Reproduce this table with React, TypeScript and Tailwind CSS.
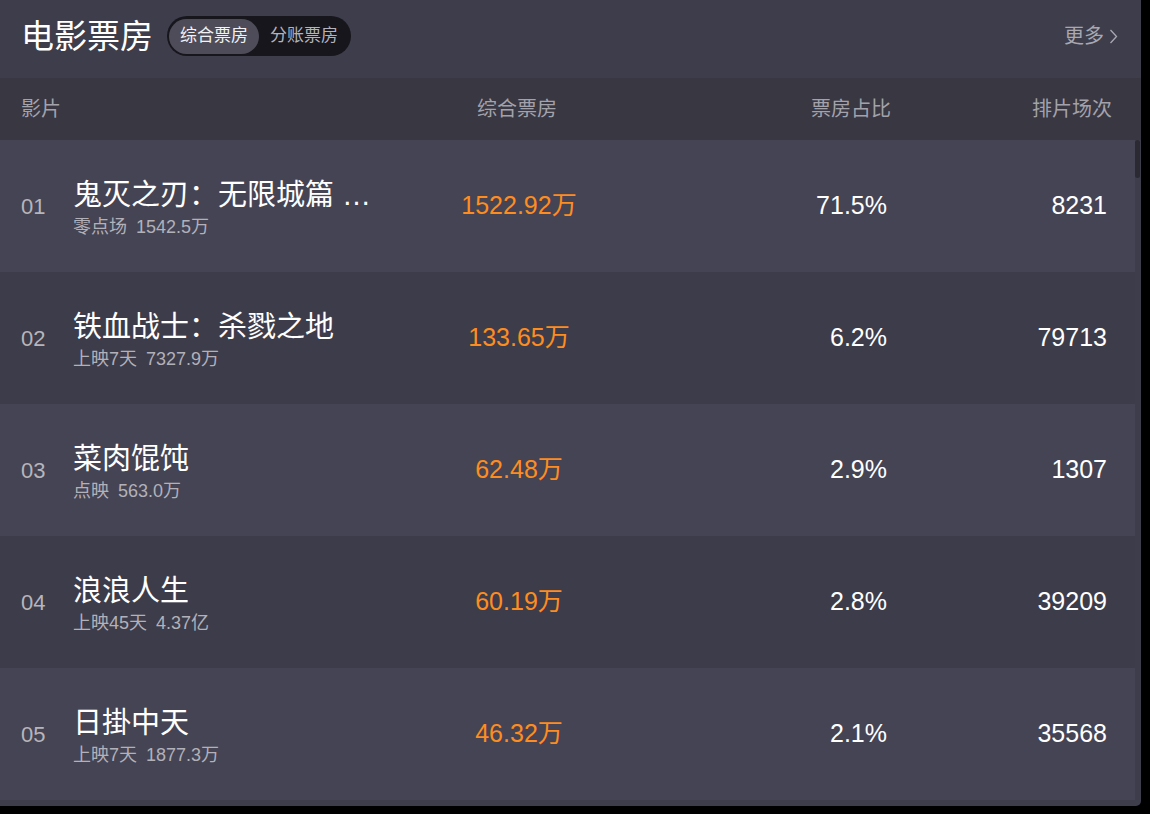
const films = [
  { rank: "01", name: "鬼灭之刃：无限城篇 …", tag: "零点场", total: "1542.5万", box: "1522.92万", rate: "71.5%", shows: "8231" },
  { rank: "02", name: "铁血战士：杀戮之地", tag: "上映7天", total: "7327.9万", box: "133.65万", rate: "6.2%", shows: "79713" },
  { rank: "03", name: "菜肉馄饨", tag: "点映", total: "563.0万", box: "62.48万", rate: "2.9%", shows: "1307" },
  { rank: "04", name: "浪浪人生", tag: "上映45天", total: "4.37亿", box: "60.19万", rate: "2.8%", shows: "39209" },
  { rank: "05", name: "日掛中天", tag: "上映7天", total: "1877.3万", box: "46.32万", rate: "2.1%", shows: "35568" },
];

export default function App() {
  return (
    <div className="w-[1150px] h-[814px] bg-black font-['Liberation_Sans','Noto_Sans_CJK_SC',sans-serif]">
      <div className="w-[1141px] h-[806px] bg-[#3e3d4b] rounded-br-[5px] overflow-hidden flex flex-col">
        {/* Top bar */}
        <div className="h-[78px] shrink-0 flex items-center pl-[21px] pr-[23px] pb-[6px]">
          <h1 className="text-[33px] leading-none text-white">电影票房</h1>
          <div className="ml-[14px] h-[40px] w-[184px] rounded-full bg-[#17161c] flex items-center px-[2px]">
            <span className="h-[35px] w-[90px] rounded-full bg-[#4e4c59] flex items-center justify-center text-[17px] text-[#f2f2f4]">
              综合票房
            </span>
            <span className="flex-1 text-center text-[17px] text-[#b4b3bb]">分账票房</span>
          </div>
          <div className="ml-auto flex items-center text-[20px] text-[#a9a8b1]">
            更多
            <svg width="9" height="15" viewBox="0 0 9 15" className="ml-[5px]" fill="none" stroke="currentColor" strokeWidth="1.3">
              <polyline points="1.5,1 7.5,7.5 1.5,14" />
            </svg>
          </div>
        </div>

        {/* Column header */}
        <div className="h-[62px] shrink-0 bg-[#383742] grid grid-cols-[379px_234px_257px_221px] items-center pl-[21px] text-[20px] text-[#a3a2ab]">
          <span>影片</span>
          <span className="text-center">综合票房</span>
          <span className="text-right">票房占比</span>
          <span className="text-right">排片场次</span>
        </div>

        {/* Body */}
        <div className="flex flex-1">
          <div className="w-[1135px] flex flex-col">
            {films.map((f, i) => (
              <div
                key={f.rank}
                className={`h-[132px] grid grid-cols-[379px_238px_249px_220px] items-center pl-[21px] ${
                  i % 2 === 0 ? "bg-[#454454]" : "bg-[#3d3c4a]"
                }`}
              >
                <div className="flex items-center">
                  <span className="w-[52px] text-[22px] text-[#b6b5bd]">{f.rank}</span>
                  <div className="flex flex-col mt-[2px]">
                    <span className="text-[29px] leading-[38px] text-white whitespace-nowrap">{f.name}</span>
                    <span className="text-[18px] leading-[22px] text-[#b2b1b9] mt-[2px]">
                      {f.tag}
                      <span className="ml-[9px]">{f.total}</span>
                    </span>
                  </div>
                </div>
                <span className="text-center text-[25px] text-[#ff8c1e]">{f.box}</span>
                <span className="text-right text-[25px] text-white">{f.rate}</span>
                <span className="text-right text-[25px] text-white">{f.shows}</span>
              </div>
            ))}
          </div>
          <div className="w-[6px] flex flex-col">
            <div className="h-[38px] w-[5px] rounded-full bg-[#2b2a33]" />
          </div>
        </div>
      </div>
    </div>
  );
}
